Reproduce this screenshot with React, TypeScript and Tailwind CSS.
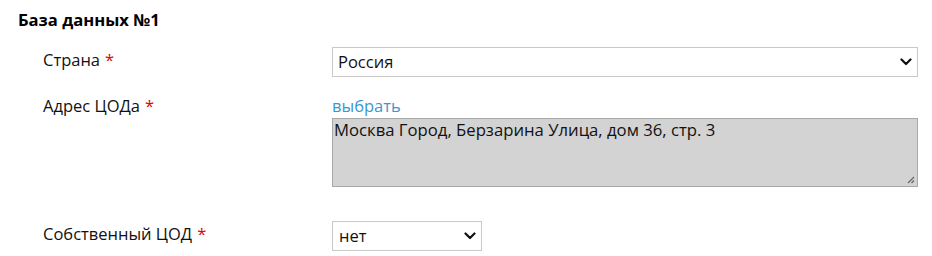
import React from "react";

function Chevron() {
  return (
    <svg width="12" height="8" viewBox="0 0 12 8" className="shrink-0">
      <path d="M1.5 1.5 L6 6 L10.5 1.5" fill="none" stroke="#111" strokeWidth="2.2" strokeLinecap="round" strokeLinejoin="round" />
    </svg>
  );
}

function Star() {
  return <span className="text-[#e00000] ml-[5px]">*</span>;
}

export default function App() {
  return (
    <div className="w-[932px] h-[256px] bg-white text-[#111] pl-[18px] pt-[8px]" style={{ fontFamily: '"Open Sans", "Noto Sans", sans-serif' }}>
      <div className="text-[16.6px] font-bold leading-[24px] text-black">База данных №1</div>
      <div className="flex mt-[15px] pl-[25px]">
        <div className="w-[289px] text-[16.5px] leading-[24px] pt-[1px]">
          Страна<Star />
        </div>
        <div className="w-[586px] h-[30px] border border-[#c9c9c9] flex items-center justify-between pl-[5px] pr-[5px] text-[16.5px]">
          <span>Россия</span>
          <Chevron />
        </div>
      </div>
      <div className="flex mt-[16px] pl-[25px]">
        <div className="w-[289px] text-[16.5px] leading-[24px] pt-[1px]">
          Адрес ЦОДа<Star />
        </div>
        <div className="flex flex-col">
          <a className="text-[#3b97cf] text-[16.5px] leading-[24px] pt-[1px]">выбрать</a>
          <div className="relative w-[586px] h-[69px] border border-[#a8a8a8] bg-[#d3d3d3] px-[1px] text-[16.7px] leading-[22px]">
            Москва Город, Берзарина Улица, дом 36, стр. 3
            <svg width="9" height="9" viewBox="0 0 9 9" className="absolute right-[2px] bottom-[2px]">
              <path d="M8 2 L2 8 M8 5.5 L5.5 8" stroke="#666" strokeWidth="1.2" fill="none" />
            </svg>
          </div>
        </div>
      </div>
      <div className="flex mt-[34px] pl-[25px]">
        <div className="w-[289px] text-[16.5px] leading-[24px] pt-[1px]">
          Собственный ЦОД<Star />
        </div>
        <div className="w-[150px] h-[30px] border border-[#c9c9c9] flex items-center justify-between pl-[6px] pr-[5px] text-[16.5px]">
          <span>нет</span>
          <Chevron />
        </div>
      </div>
    </div>
  );
}
